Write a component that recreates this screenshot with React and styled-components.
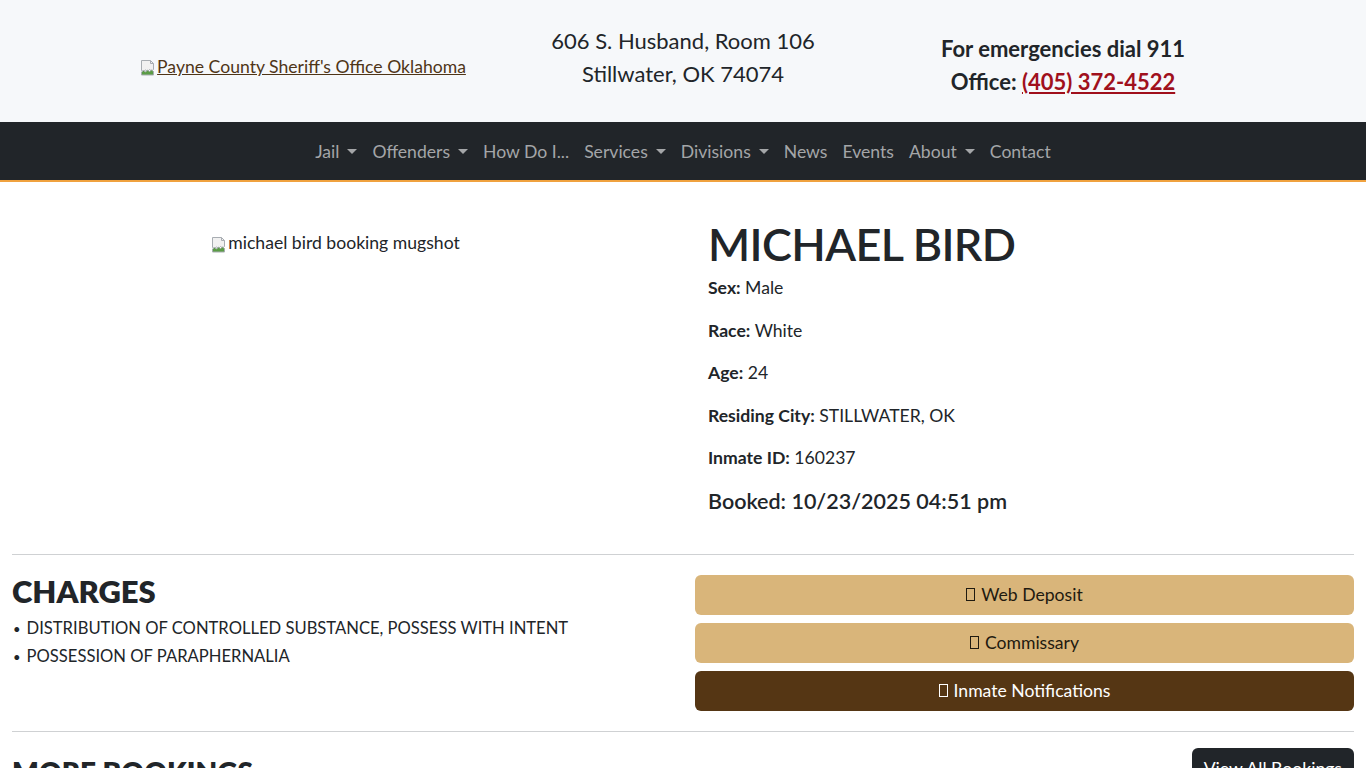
import React from 'react';
import styled, { createGlobalStyle } from 'styled-components';

const GlobalStyle = createGlobalStyle`
  * { box-sizing: border-box; }
  body {
    margin: 0;
    font-family: Lato, "Open Sans", "Liberation Sans", sans-serif;
    color: #212529;
    background: #fff;
    font-size: 17.6px;
  }
`;

const TopHeader = styled.header`
  background: #f6f8fa;
  height: 122px;
`;

const HeaderContainer = styled.div`
  width: 1140px;
  margin: 0 auto;
  display: grid;
  grid-template-columns: repeat(3, 1fr);
  height: 100%;
`;

const HeaderCol = styled.div`
  text-align: center;
  padding-top: ${p => p.$top}px;
  font-size: 22px;
  line-height: 33px;
  font-weight: ${p => (p.$bold ? 700 : 400)};
`;

const LogoLink = styled.a`
  display: inline-flex;
  align-items: flex-end;
  font-size: 17.6px;
  color: #4f3517;
  text-decoration: underline;
  line-height: 20px;
`;

const PhoneLink = styled.a`
  color: #a0101c;
  text-decoration: underline;
`;

const NavBar = styled.nav`
  background: #212529;
  height: 60px;
  border-bottom: 2px solid #f0a23f;
  display: flex;
  justify-content: center;
  align-items: center;
`;

const NavItem = styled.a`
  color: #a4a6a8;
  font-size: 17.6px;
  padding: 0 7.5px;
  text-decoration: none;
  display: flex;
  align-items: center;
`;

const Caret = styled.span`
  display: inline-block;
  margin-left: 8px;
  border-top: 5px solid currentColor;
  border-left: 5px solid transparent;
  border-right: 5px solid transparent;
`;

const Main = styled.main`
  padding: 0 12px;
`;

const ProfileRow = styled.div`
  display: grid;
  grid-template-columns: 1fr 1fr;
  padding-top: 34px;
  padding-bottom: 40px;
`;

const MugCol = styled.div`
  display: flex;
  justify-content: center;
  align-items: flex-start;
  padding-top: 16px;
  padding-right: 24px;
`;

const AltText = styled.span`
  display: inline-flex;
  align-items: flex-end;
  font-size: 17.6px;
  line-height: 22px;
`;

const DetailCol = styled.div`
  padding-left: 25px;
`;

const Name = styled.h1`
  margin: 0 0 3px;
  font-size: 45px;
  font-weight: 600;
  line-height: 56px;
  letter-spacing: -0.6px;
`;

const Detail = styled.p`
  margin: 0 0 16px;
  line-height: 26.5px;
  & b { font-weight: 700; }
`;

const Booked = styled.h4`
  margin: 0;
  font-size: 21.5px;
  font-weight: 600;
  line-height: 26px;
`;

const Rule = styled.hr`
  margin: 0;
  border: 0;
  border-top: 1px solid #cfd1d3;
`;

const ChargesRow = styled.div`
  display: grid;
  grid-template-columns: 1fr 1fr;
  padding: 20px 0 20px;
`;

const SectionTitle = styled.h2`
  margin: 0 0 8px;
  font-size: 31px;
  font-weight: 800;
  line-height: 32px;
`;

const ChargeList = styled.ul`
  list-style: none;
  margin: 0;
  padding: 0;
`;

const Charge = styled.li`
  font-size: 16.6px;
  line-height: 27px;
  &::before {
    content: '•';
    font-size: 13px;
    margin-right: 6px;
    margin-left: 1px;
  }
`;

const ActionStack = styled.div`
  display: flex;
  flex-direction: column;
  gap: 8px;
  padding-left: 12px;
`;

const ActionButton = styled.a`
  display: flex;
  justify-content: center;
  align-items: center;
  gap: 6px;
  height: 40px;
  border-radius: 6px;
  font-size: 17.6px;
  text-decoration: none;
  background: ${p => (p.$dark ? '#553614' : '#d9b57a')};
  color: ${p => (p.$dark ? '#fff' : '#1f1a10')};
`;

const Tofu = styled.span`
  display: inline-block;
  width: 9px;
  height: 13px;
  border: 1px solid currentColor;
`;

const BookingsRow = styled.div`
  display: flex;
  justify-content: space-between;
  align-items: flex-start;
  padding-top: 16px;
`;

const BookingsTitle = styled.h2`
  margin: 8px 0 0;
  font-size: 28px;
  font-weight: 800;
  line-height: 32px;
`;

const DarkButton = styled.a`
  background: #212529;
  color: #fff;
  border-radius: 6px;
  padding: 8px 12px;
  font-size: 17.6px;
  line-height: 26px;
  text-decoration: none;
`;

const BrokenImage = () => (
  <svg width="16" height="18" viewBox="0 0 16 18" style={{ marginRight: 1, flexShrink: 0 }}>
    <path d="M1.5 1.5h9l3 3v6l-2 1.5-2-1.5-2 2-2-1.5-2 1.5-2-1z" fill="#f1f1f1" stroke="#a8adb2" />
    <path d="M1.5 13l2-1.5 2 1.5 2-2 2 1.5 2-1.5 2 1.5v3.5h-12z" fill="#5a9c45" stroke="#a8adb2" />
    <path d="M10.5 1.5v3h3" fill="none" stroke="#a8adb2" />
  </svg>
);

const navLinks = [
  ['Jail', true],
  ['Offenders', true],
  ['How Do I...', false],
  ['Services', true],
  ['Divisions', true],
  ['News', false],
  ['Events', false],
  ['About', true],
  ['Contact', false],
];

export default function App() {
  return (
    <>
      <GlobalStyle />
      <TopHeader>
        <HeaderContainer>
          <HeaderCol $top={52}>
            <LogoLink href="#">
              <BrokenImage />
              Payne County Sheriff's Office Oklahoma
            </LogoLink>
          </HeaderCol>
          <HeaderCol $top={24}>
            606 S. Husband, Room 106
            <br />
            Stillwater, OK 74074
          </HeaderCol>
          <HeaderCol $top={32} $bold>
            For emergencies dial 911
            <br />
            Office: <PhoneLink href="#">(405) 372-4522</PhoneLink>
          </HeaderCol>
        </HeaderContainer>
      </TopHeader>

      <NavBar>
        {navLinks.map(([label, drop]) => (
          <NavItem key={label} href="#">
            {label}
            {drop && <Caret />}
          </NavItem>
        ))}
      </NavBar>

      <Main>
        <ProfileRow>
          <MugCol>
            <AltText>
              <BrokenImage />
              michael bird booking mugshot
            </AltText>
          </MugCol>
          <DetailCol>
            <Name>MICHAEL BIRD</Name>
            <Detail><b>Sex:</b> Male</Detail>
            <Detail><b>Race:</b> White</Detail>
            <Detail><b>Age:</b> 24</Detail>
            <Detail><b>Residing City:</b> STILLWATER, OK</Detail>
            <Detail><b>Inmate ID:</b> 160237</Detail>
            <Booked>Booked: 10/23/2025 04:51 pm</Booked>
          </DetailCol>
        </ProfileRow>

        <Rule />

        <ChargesRow>
          <div>
            <SectionTitle>CHARGES</SectionTitle>
            <ChargeList>
              <Charge>DISTRIBUTION OF CONTROLLED SUBSTANCE, POSSESS WITH INTENT</Charge>
              <Charge>POSSESSION OF PARAPHERNALIA</Charge>
            </ChargeList>
          </div>
          <ActionStack>
            <ActionButton href="#"><Tofu /> Web Deposit</ActionButton>
            <ActionButton href="#"><Tofu /> Commissary</ActionButton>
            <ActionButton href="#" $dark><Tofu /> Inmate Notifications</ActionButton>
          </ActionStack>
        </ChargesRow>

        <Rule />

        <BookingsRow>
          <BookingsTitle>MORE BOOKINGS</BookingsTitle>
          <DarkButton href="#">View All Bookings</DarkButton>
        </BookingsRow>
      </Main>
    </>
  );
}
